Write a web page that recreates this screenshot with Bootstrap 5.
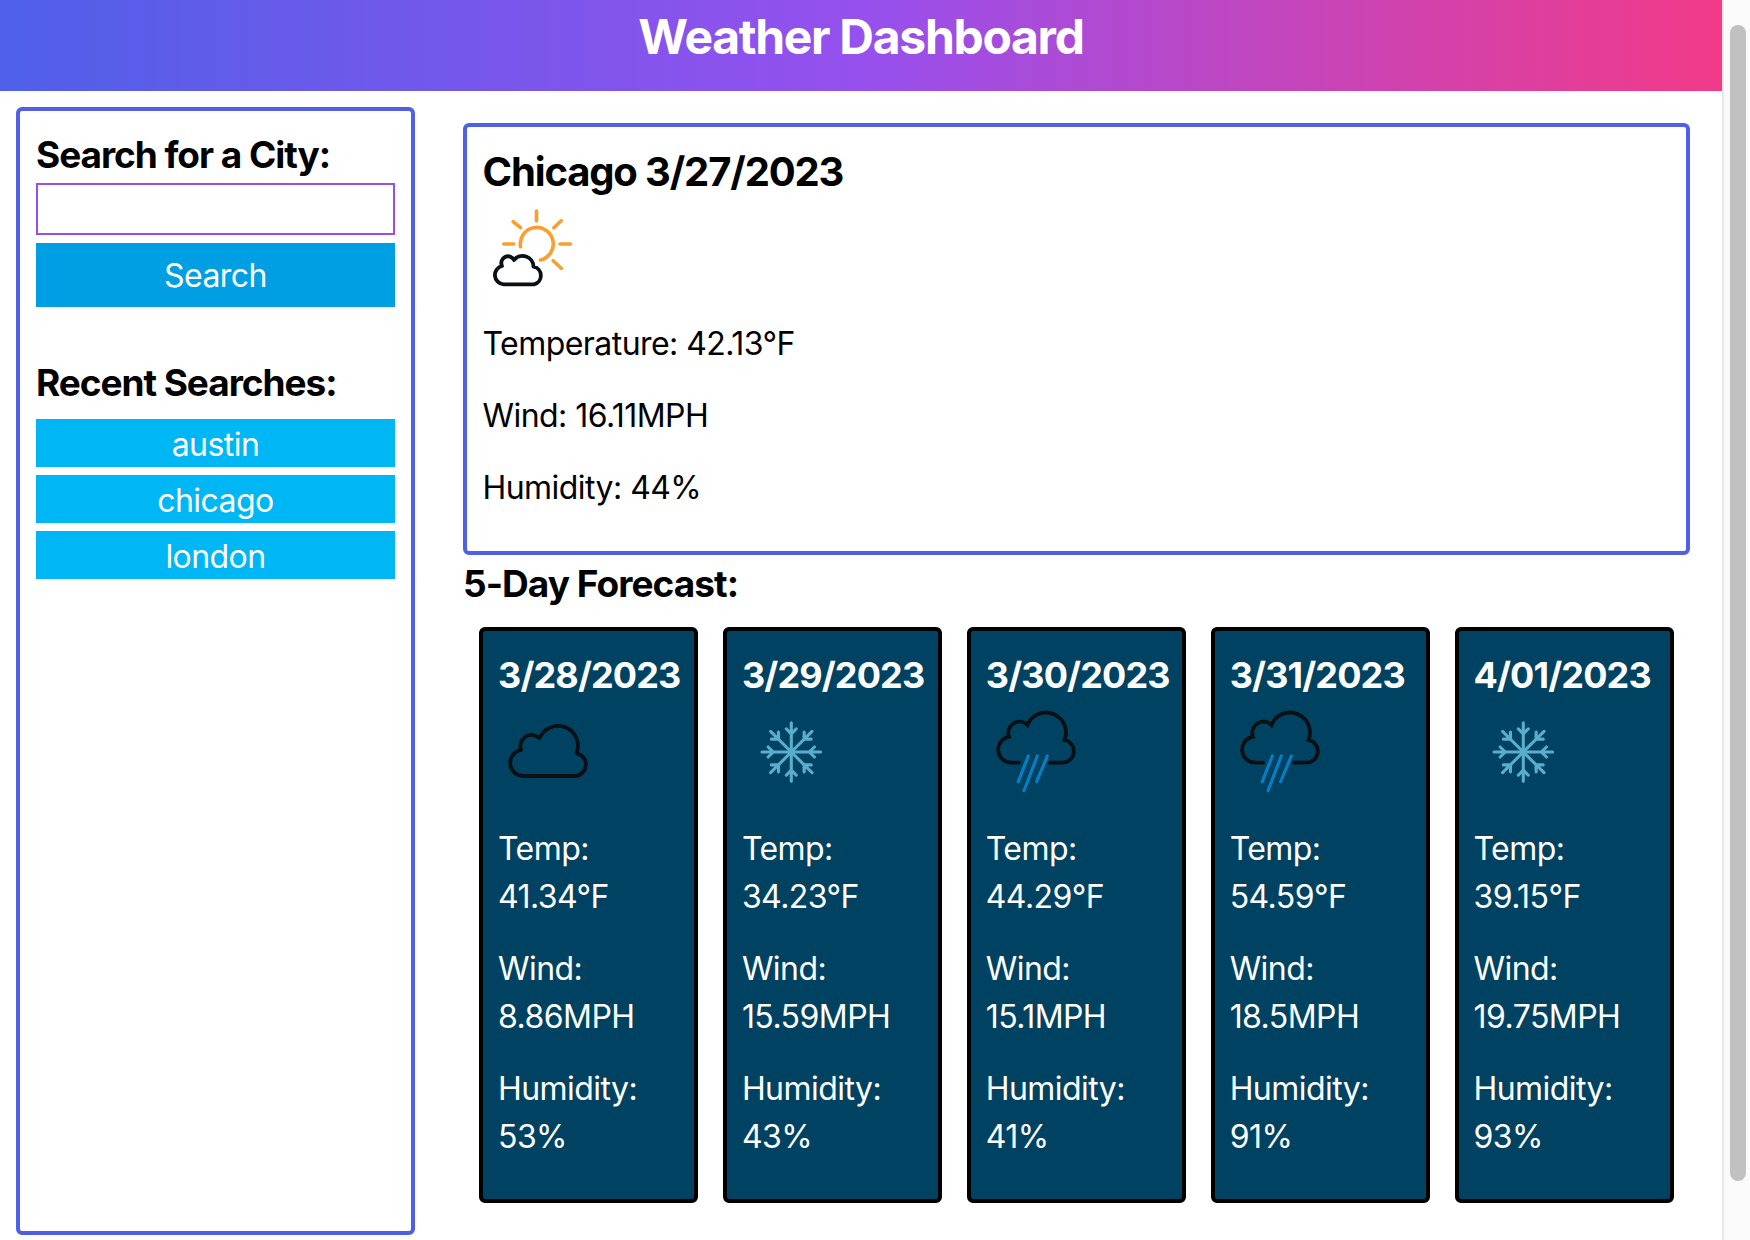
<!DOCTYPE html>
<html lang="en">
<head>
  <meta charset="UTF-8" />
  <meta name="viewport" content="width=device-width, initial-scale=1.0"/>
  <title>Weather Dashboard</title>
  <link href="https://cdn.jsdelivr.net/npm/bootstrap@5.3.3/dist/css/bootstrap.min.css" rel="stylesheet">
  <style>
    html, body {
      height: 1240px;
      overflow: hidden;
    }

    body {
      font-family: Inter, "Liberation Sans", sans-serif;
      font-size: 32px;
      line-height: 48px;
      letter-spacing: -0.55px;
      color: #000;
    }

    .page-wrap {
      width: 1722px;
    }

    .fake-scrollbar {
      width: 28px;
      height: 1240px;
      background-color: #fafafa;
      border-left: 2px solid #e8e8e8;
      padding: 25px 4px 59px 6px;
    }

    .fake-thumb {
      height: 100%;
      background-color: #c1c1c1;
      border-radius: 8px;
    }

    .top-header {
      height: 91px;
      background: linear-gradient(90deg, #4f60e8, #9650ee 50%, #f23a88);
      color: #fff;
      font-size: 48px;
      line-height: 73px;
      font-weight: 700;
      letter-spacing: -1.3px;
      text-align: center;
    }

    .side-panel {
      width: 399px;
      height: 1128px;
      margin: 16px 0 0 16px;
      padding: 20px 16px;
      border: 4px solid #4f60e8;
      border-radius: 6px;
      flex-shrink: 0;
    }

    .side-title {
      font-size: 37px;
      line-height: 48px;
      font-weight: 700;
      letter-spacing: -1.05px;
      margin: 0;
    }

    .city-input {
      display: block;
      width: 100%;
      height: 52px;
      margin-top: 4px;
      border: 2px solid #9650ea;
      border-radius: 0;
    }

    .search-btn {
      width: 100%;
      height: 64px;
      margin-top: 8px;
      margin-bottom: 52px;
      background-color: #009fe3;
      color: #fff;
      border: 0;
      border-radius: 0;
      font-size: 32px;
      letter-spacing: -0.55px;
      padding: 2px 0 0;
    }

    .recent-list {
      margin-top: 12px;
    }

    .recent-btn {
      display: block;
      width: 100%;
      height: 48px;
      margin-bottom: 8px;
      background-color: #00b7f5;
      color: #fff;
      border: 0;
      border-radius: 0;
      font-size: 32px;
      line-height: 48px;
      letter-spacing: -0.55px;
      padding: 2px 0 0;
    }

    .main-panel {
      margin-left: 48px;
      width: 1227px;
      padding-top: 32px;
    }

    .today-box {
      height: 432px;
      border: 4px solid #4f60e8;
      border-radius: 6px;
      padding: 21px 15.5px;
    }

    .today-title {
      font-size: 40px;
      line-height: 48px;
      font-weight: 700;
      letter-spacing: -1.15px;
      margin: 0;
    }

    .weather-icon {
      display: block;
      width: 100px;
      height: 100px;
    }

    .today-icon {
      margin: 4px 0 20px;
    }

    .day-icon {
      margin: 3px 0 23px;
    }

    .today-box p, .day-card p {
      margin-bottom: 24px;
    }

    .forecast-title {
      font-size: 37px;
      line-height: 48px;
      font-weight: 700;
      letter-spacing: -0.95px;
      margin: 5px 0 0;
    }

    .forecast-row {
      padding: 19px 16px 0;
      gap: 24.4px;
    }

    .day-card {
      flex: 1 1 0;
      min-width: 0;
      height: 576px;
      padding: 20px 15px;
      background-color: #004261;
      color: #fff;
      border: 4px solid #000;
      border-radius: 6px;
    }

    .day-title {
      font-size: 36px;
      line-height: 48px;
      font-weight: 700;
      letter-spacing: -0.85px;
      margin: 0;
      white-space: nowrap;
    }
  </style>
</head>
<body>
  <svg width="0" height="0" class="position-absolute">
    <defs>
      <g id="i-cloud" fill="none" stroke="#0b1014" stroke-width="3.8" stroke-linejoin="round" stroke-linecap="round">
        <path d="M25.5 74H76A11.45 11.45 0 0 0 78.5 51.3A19.6 19.6 0 0 0 41.5 36.3A11.2 11.2 0 0 0 23 48A13.1 13.1 0 0 0 25.5 74Z"/>
      </g>
      <g id="i-rain" fill="none" stroke-linecap="round">
        <path transform="translate(0 -13.3)" stroke="#0b1014" stroke-width="3.8" d="M64 74H76A11.45 11.45 0 0 0 78.5 51.3A19.6 19.6 0 0 0 41.5 36.3A11.2 11.2 0 0 0 23 48A13.1 13.1 0 0 0 25.5 74H33"/>
        <path stroke="#0a7cc0" stroke-width="3.2" d="M42.3 54L32.3 79.7M51.3 54L38 88.7M61.3 54L50.7 79.7"/>
      </g>
      <g id="i-snow" fill="none" stroke="#5aaecb" stroke-width="3.1" stroke-linecap="round">
        <g id="snow-arm">
          <path d="M49.3 50V20.7M44.3 26.8L49.3 32L54.3 26.8"/>
          <path transform="rotate(45 49.3 50)" d="M49.3 50V20.7M44.3 26.8L49.3 32L54.3 26.8"/>
        </g>
        <use href="#snow-arm" transform="rotate(90 49.3 50)"/>
        <use href="#snow-arm" transform="rotate(180 49.3 50)"/>
        <use href="#snow-arm" transform="rotate(270 49.3 50)"/>
      </g>
    </defs>
  </svg>

  <div class="d-flex">
    <div class="page-wrap">
      <header class="top-header">Weather Dashboard</header>
      <div class="d-flex">
        <aside class="side-panel">
          <h2 class="side-title">Search for a City:</h2>
          <input class="city-input" type="text" />
          <button class="search-btn btn">Search</button>
          <h2 class="side-title">Recent Searches:</h2>
          <div class="recent-list">
            <button class="recent-btn btn">austin</button>
            <button class="recent-btn btn">chicago</button>
            <button class="recent-btn btn">london</button>
          </div>
        </aside>

        <main class="main-panel">
          <section class="today-box">
            <h2 class="today-title">Chicago 3/27/2023</h2>
            <svg class="weather-icon today-icon" viewBox="0 0 100 100">
              <g fill="none" stroke="#fb9e2c" stroke-width="3.6" stroke-linecap="round">
                <path d="M53.5 11V21M20.8 44H30.8M77 44H87.5M30.2 21.7L37.5 27.7M70.8 27.7L78.2 20.7M70.2 60.7L78.2 68.3"/>
                <path d="M37.5 46.7A16.5 16.5 0 1 1 57.5 60"/>
              </g>
              <path fill="none" stroke="#0b1014" stroke-width="3.8" stroke-linejoin="round" d="M20.5 84.3H51A9 9 0 0 0 50.5 66.7A11 11 0 0 0 31 60A6.5 6.5 0 0 0 19 66A9.3 9.3 0 0 0 20.5 84.3Z"/>
            </svg>
            <p>Temperature: 42.13°F</p>
            <p>Wind: 16.11MPH</p>
            <p>Humidity: 44%</p>
          </section>

          <h3 class="forecast-title">5-Day Forecast:</h3>
          <div class="forecast-row d-flex">
            <div class="day-card">
              <h4 class="day-title">3/28/2023</h4>
              <svg class="weather-icon day-icon" viewBox="0 0 100 100"><use href="#i-cloud"/></svg>
              <p>Temp:<br>41.34°F</p>
              <p>Wind:<br>8.86MPH</p>
              <p>Humidity:<br>53%</p>
            </div>
            <div class="day-card">
              <h4 class="day-title">3/29/2023</h4>
              <svg class="weather-icon day-icon" viewBox="0 0 100 100"><use href="#i-snow"/></svg>
              <p>Temp:<br>34.23°F</p>
              <p>Wind:<br>15.59MPH</p>
              <p>Humidity:<br>43%</p>
            </div>
            <div class="day-card">
              <h4 class="day-title">3/30/2023</h4>
              <svg class="weather-icon day-icon" viewBox="0 0 100 100"><use href="#i-rain"/></svg>
              <p>Temp:<br>44.29°F</p>
              <p>Wind:<br>15.1MPH</p>
              <p>Humidity:<br>41%</p>
            </div>
            <div class="day-card">
              <h4 class="day-title">3/31/2023</h4>
              <svg class="weather-icon day-icon" viewBox="0 0 100 100"><use href="#i-rain"/></svg>
              <p>Temp:<br>54.59°F</p>
              <p>Wind:<br>18.5MPH</p>
              <p>Humidity:<br>91%</p>
            </div>
            <div class="day-card">
              <h4 class="day-title">4/01/2023</h4>
              <svg class="weather-icon day-icon" viewBox="0 0 100 100"><use href="#i-snow"/></svg>
              <p>Temp:<br>39.15°F</p>
              <p>Wind:<br>19.75MPH</p>
              <p>Humidity:<br>93%</p>
            </div>
          </div>
        </main>
      </div>
    </div>
    <div class="fake-scrollbar"><div class="fake-thumb"></div></div>
  </div>
</body>
</html>
